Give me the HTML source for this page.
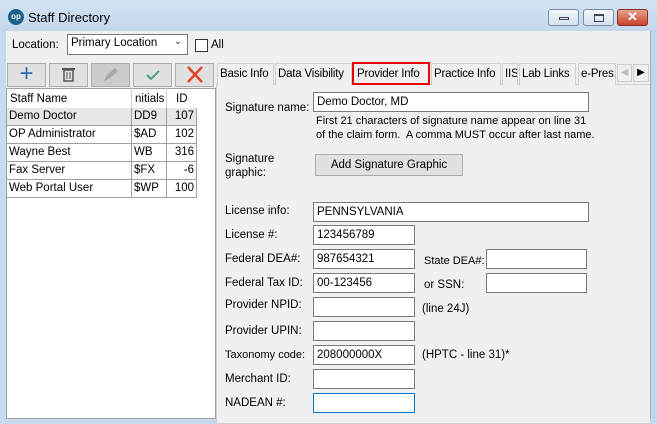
<!DOCTYPE html>
<html><head><style>
*{box-sizing:border-box;margin:0;padding:0}
body{width:657px;height:419px;overflow:hidden;background:#c8dbee;font-family:"Liberation Sans",sans-serif;font-size:11.5px;color:#000;position:relative}
.a{position:absolute}
.inp{position:absolute;background:#fff;border:1px solid #7a7a7a;height:20px;padding:2px 3px;font-size:11.5px;line-height:14px;white-space:nowrap}
.lbl{position:absolute;font-size:11.5px;white-space:nowrap}
.tb{position:absolute;top:63px;height:24px;width:39px;background:#e1e1e1;border:1px solid #adadad}
.tab{position:absolute;top:63px;height:22px;background:#f0f0f0;border:1px solid #d0d0d0;border-bottom:none;padding:4px 2px 0;font-size:11.5px;white-space:nowrap;overflow:hidden;letter-spacing:-0.2px}
.row{position:absolute;left:7px;height:18px;width:190px;border-bottom:1px solid #a0a0a0;font-size:11.5px}
.row span{position:absolute;top:2px}
.wb{position:absolute;top:9px;height:17px;width:31px;border:1px solid #7a8ca3;border-radius:3px;background:linear-gradient(#f3f7fb,#d4e0ee)}
</style></head><body>
<div class="a" style="left:0;top:0;width:657px;height:32px;background:linear-gradient(#d3e3f3,#c3d7ec)"></div>
<div class="a" style="left:8px;top:9px;width:16px;height:16px;border-radius:50%;background:#1f5f8b;color:#fff;font-size:8px;font-weight:bold;text-align:center;line-height:16px">op</div>
<div class="a" style="left:28px;top:10px;font-size:13px">Staff Directory</div>
<div class="wb" style="left:548px"><div class="a" style="left:10px;top:7px;width:10px;height:3px;border:1px solid #445"></div></div>
<div class="wb" style="left:583px"><div class="a" style="left:10px;top:4px;width:10px;height:8px;border:1px solid #445;border-top-width:2px"></div></div>
<div class="wb" style="left:617px;border-color:#8a2e1e;background:linear-gradient(#e9a28f,#c8432b);color:#fff;font-weight:bold;text-align:center;line-height:14px;font-size:13px">✕</div>
<div class="a" style="left:6px;top:31px;width:644px;height:388px;background:#f0f0f0"></div>
<div class="lbl" style="left:12px;top:39px">Location:</div>
<div class="a" style="left:67px;top:34px;width:121px;height:21px;background:#fff;border:1px solid #7a7a7a;padding:2px 3px;white-space:nowrap">Primary Location<span class="a" style="right:5px;top:1px;font-size:10px;color:#444">&#8964;</span></div>
<div class="a" style="left:195px;top:39px;width:13px;height:13px;background:#fff;border:1px solid #333"></div>
<div class="lbl" style="left:211px;top:39px">All</div>
<div class="tb" style="left:7px;color:#2f6cb5;font-size:24px;text-align:center;line-height:20px">+</div>
<div class="tb" style="left:49px"><svg width="37" height="22"><rect x="14" y="6" width="9" height="11" fill="none" stroke="#555" stroke-width="1.5"/><line x1="12" y1="5" x2="25" y2="5" stroke="#555" stroke-width="2"/><line x1="17" y1="8" x2="17" y2="15" stroke="#555"/><line x1="20" y1="8" x2="20" y2="15" stroke="#555"/></svg></div>
<div class="tb" style="left:91px;background:#cccccc"><svg width="37" height="22"><path d="M12 17 L14 12 L23 4 L26 7 L17 15 Z" fill="#a8a8a8"/></svg></div>
<div class="tb" style="left:133px"><svg width="37" height="22"><path d="M13 11 L17 15 L25 7" fill="none" stroke="#4aa27a" stroke-width="2"/></svg></div>
<div class="tb" style="left:175px"><svg width="37" height="22"><path d="M12 3 L26 18 M26 3 L12 18" stroke="#e0452a" stroke-width="2.5"/></svg></div>
<div class="a" style="left:6px;top:88px;width:210px;height:331px;background:#fff;border:1px solid #a0a0a0"></div>
<div class="a" style="left:7px;top:108px;width:190px;height:18px;background:#e6e6e6"></div>
<div class="lbl" style="left:10px;top:93px">Staff Name</div><div class="lbl" style="left:135px;top:93px;width:30px;overflow:hidden">nitials</div><div class="lbl" style="left:176px;top:93px">ID</div>
<div class="a" style="left:131px;top:88px;width:1px;height:109px;background:#d0d0d0"></div>
<div class="a" style="left:166px;top:88px;width:1px;height:109px;background:#d0d0d0"></div>
<div class="a" style="left:131px;top:108px;width:1px;height:89px;background:#a0a0a0"></div>
<div class="a" style="left:166px;top:108px;width:1px;height:89px;background:#a0a0a0"></div>
<div class="a" style="left:196px;top:108px;width:1px;height:89px;background:#a0a0a0"></div>
<div class="row" style="top:108px"><span style="left:2px">Demo Doctor</span><span style="left:127px">DD9</span><span style="right:3px">107</span></div>
<div class="row" style="top:126px"><span style="left:2px">OP Administrator</span><span style="left:127px">$AD</span><span style="right:3px">102</span></div>
<div class="row" style="top:144px"><span style="left:2px">Wayne Best</span><span style="left:127px">WB</span><span style="right:3px">316</span></div>
<div class="row" style="top:162px"><span style="left:2px">Fax Server</span><span style="left:127px">$FX</span><span style="right:3px">-6</span></div>
<div class="row" style="top:180px"><span style="left:2px">Web Portal User</span><span style="left:127px">$WP</span><span style="right:3px">100</span></div>
<div class="a" style="left:216px;top:84px;width:435px;height:340px;border:1px solid #d0d0d0;background:#f0f0f0"></div>
<div class="tab" style="left:217px;width:57px">Basic Info</div>
<div class="tab" style="left:275px;width:77px">Data Visibility</div>
<div class="tab" style="left:352px;top:62px;height:23px;width:78px;border:2px solid #e00;padding-top:4px;padding-left:3px">Provider Info</div>
<div class="tab" style="left:431px;width:70px">Practice Info</div>
<div class="tab" style="left:502px;width:16px">IIS</div>
<div class="tab" style="left:519px;width:57px">Lab Links</div>
<div class="tab" style="left:578px;width:38px">e-Pres</div>
<div class="a" style="left:617px;top:64px;width:15px;height:18px;border:1px solid #ccc;background:#f0f0f0;color:#bbb;font-size:10px;text-align:center;line-height:16px">◀</div>
<div class="a" style="left:633px;top:64px;width:16px;height:18px;border:1px solid #ccc;background:#f0f0f0;font-size:10px;text-align:center;line-height:16px">▶</div>
<div class="a" style="left:650px;top:31px;width:7px;height:388px;background:#c0d6ec;border-left:1px solid #9ab"></div>
<div class="lbl" style="left:225px;top:102px">Signature name:</div>
<div class="inp" style="left:313px;top:92px;width:276px">Demo Doctor, MD</div>
<div class="lbl" style="left:316px;top:114px;line-height:14px;font-size:11px">First 21 characters of signature name appear on line 31<br>of the claim form.&nbsp; A comma MUST occur after last name.</div>
<div class="lbl" style="left:225px;top:152px;line-height:14px">Signature<br>graphic:</div>
<div class="a" style="left:315px;top:154px;width:148px;height:22px;background:#e1e1e1;border:1px solid #adadad;text-align:center;line-height:20px">Add Signature Graphic</div>
<div class="lbl" style="left:225px;top:205px">License info:</div>
<div class="inp" style="left:313px;top:202px;width:276px">PENNSYLVANIA</div>
<div class="lbl" style="left:225px;top:229px">License #:</div>
<div class="inp" style="left:313px;top:225px;width:102px">123456789</div>
<div class="lbl" style="left:225px;top:253px">Federal DEA#:</div>
<div class="inp" style="left:313px;top:249px;width:102px">987654321</div>
<div class="lbl" style="left:424px;top:255px;font-size:11px">State DEA#:</div>
<div class="inp" style="left:486px;top:249px;width:101px"></div>
<div class="lbl" style="left:225px;top:277px">Federal Tax ID:</div>
<div class="inp" style="left:313px;top:273px;width:102px">00-123456</div>
<div class="lbl" style="left:424px;top:279px">or SSN:</div>
<div class="inp" style="left:486px;top:273px;width:101px"></div>
<div class="lbl" style="left:225px;top:299px">Provider NPID:</div>
<div class="inp" style="left:313px;top:297px;width:102px"></div>
<div class="lbl" style="left:422px;top:303px">(line 24J)</div>
<div class="lbl" style="left:225px;top:325px">Provider UPIN:</div>
<div class="inp" style="left:313px;top:321px;width:102px"></div>
<div class="lbl" style="left:225px;top:349px;font-size:11px">Taxonomy code:</div>
<div class="inp" style="left:313px;top:345px;width:102px">208000000X</div>
<div class="lbl" style="left:422px;top:349px">(HPTC - line 31)*</div>
<div class="lbl" style="left:225px;top:373px">Merchant ID:</div>
<div class="inp" style="left:313px;top:369px;width:102px"></div>
<div class="lbl" style="left:225px;top:397px">NADEAN #:</div>
<div class="inp" style="left:313px;top:393px;width:102px;border-color:#0078d7"></div>
</body></html>
